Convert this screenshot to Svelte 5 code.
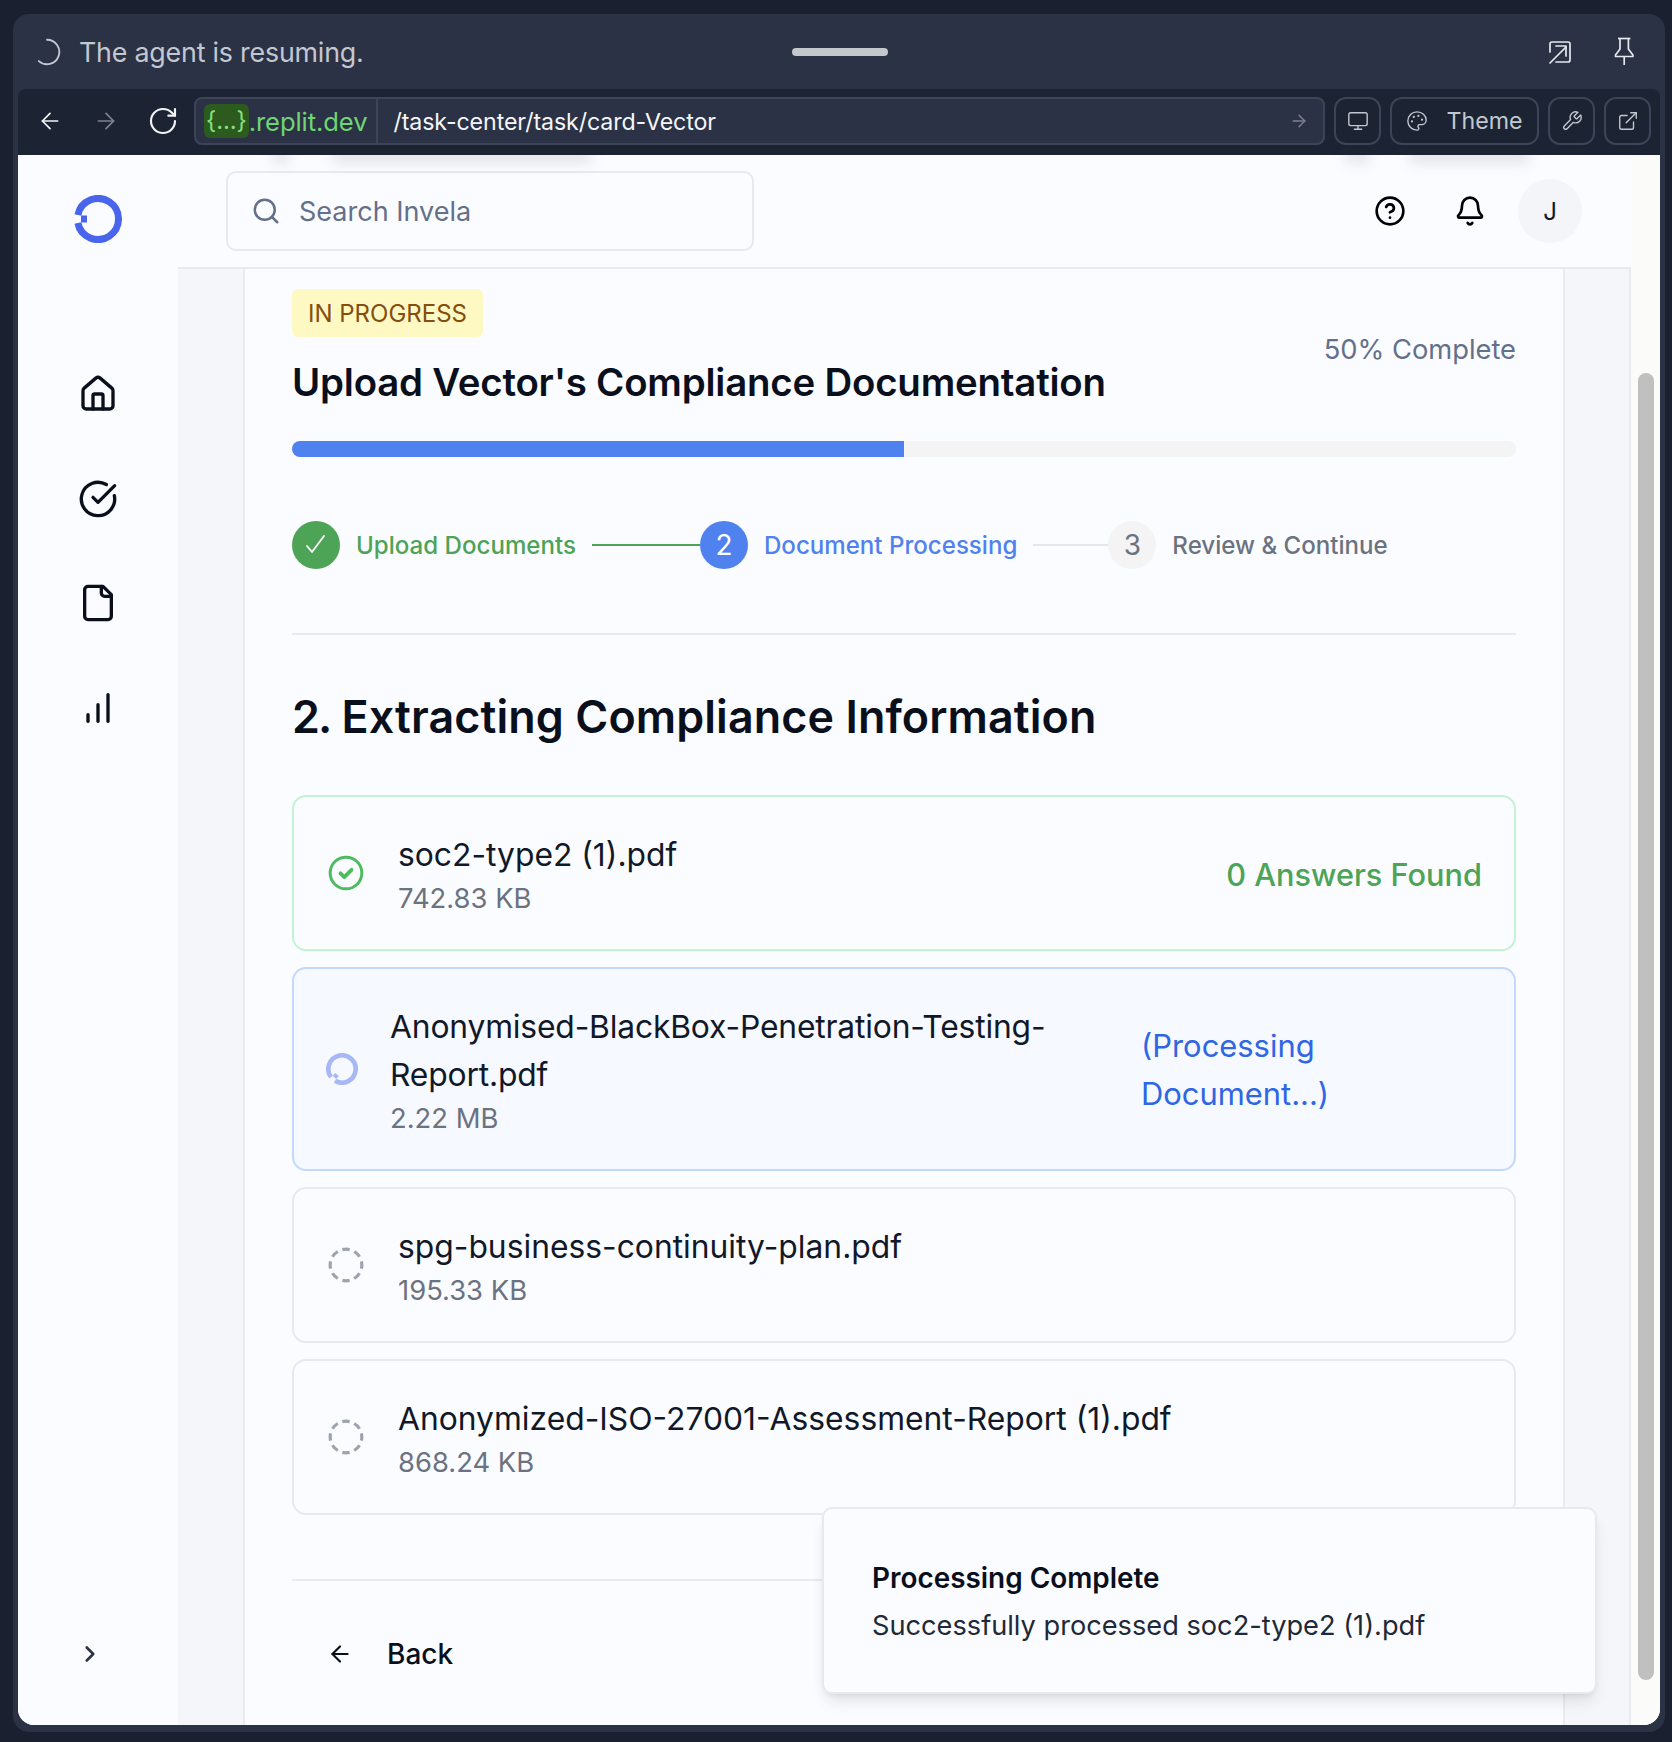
<script lang="ts">
  const navItems = [
    ["M15 21v-8a1 1 0 0 0-1-1h-4a1 1 0 0 0-1 1v8", "M3 10a2 2 0 0 1 .709-1.528l7-5.999a2 2 0 0 1 2.582 0l7 5.999A2 2 0 0 1 21 10v9a2 2 0 0 1-2 2H5a2 2 0 0 1-2-2z"],
    ["M21.801 10A10 10 0 1 1 17 3.335", "m9 11 3 3L22 4"],
    ["M15 2H6a2 2 0 0 0-2 2v16a2 2 0 0 0 2 2h12a2 2 0 0 0 2-2V7Z", "M14 2v4a2 2 0 0 0 2 2h4"],
    ["M12 20V10", "M18 20V4", "M6 20v-4"],
  ];
  const pending = [
    { name: "spg-business-continuity-plan.pdf", size: "195.33 KB" },
    { name: "Anonymized-ISO-27001-Assessment-Report (1).pdf", size: "868.24 KB" },
  ];
</script>

<div class="page">
  <div class="window">
    <div class="agent-bar">
      <div class="agent-status">
        <svg class="spin" viewBox="0 0 24 24"><path d="M12 1.5a10.5 10.5 0 1 1-7 18.3" /></svg>
        <span>The agent is resuming.</span>
      </div>
      <div class="handle"></div>
      <div class="agent-actions">
        <svg class="popout" viewBox="0 0 26 26"><path d="M3 13V5a2 2 0 0 1 2-2h16a2 2 0 0 1 2 2v16a2 2 0 0 1-2 2H9" /><path d="M3 24 19 8" /><path d="M9 7h10v10" /></svg>
        <svg class="pin" viewBox="0 0 20 30"><path d="M4 1.5h12.4" /><path d="M6 1.5V12L1.5 18v1.5h17.4V18L14.4 12V1.5" /><path d="M10.2 19.5V28" /></svg>
      </div>
    </div>

    <div class="nav-bar">
      <svg class="nav-icon" viewBox="0 0 24 24"><path d="m12 19-7-7 7-7" /><path d="M19 12H5" /></svg>
      <svg class="nav-icon dim" viewBox="0 0 24 24"><path d="m12 5 7 7-7 7" /><path d="M5 12h14" /></svg>
      <svg class="nav-icon reload" viewBox="0 0 24 24"><path d="M21 12a9 9 0 1 1-9-9c2.52 0 4.93 1 6.74 2.74L21 8" /><path d="M21 3v5h-5" /></svg>
      <div class="url">
        <div class="domain"><span class="pill">{"{...}"}</span>.replit.dev</div>
        <div class="path">/task-center/task/card-Vector</div>
        <svg class="go" viewBox="0 0 24 24"><path d="m12 5 7 7-7 7" /><path d="M5 12h14" /></svg>
      </div>
      <button class="tool">
        <svg viewBox="0 0 24 24"><rect x="2" y="3" width="20" height="14" rx="2" /><path d="M8 21h8" /><path d="M12 17v4" /></svg>
      </button>
      <button class="tool theme">
        <svg viewBox="0 0 24 24"><path d="M12 22a1 1 0 0 1 0-20 10 9 0 0 1 10 9 5 5 0 0 1-5 5h-2.25a1.75 1.75 0 0 0-1.4 2.8l.3.4a1.75 1.75 0 0 1-1.4 2.8z" /><circle cx="13.5" cy="6.5" r=".5" /><circle cx="17.5" cy="10.5" r=".5" /><circle cx="6.5" cy="12.5" r=".5" /><circle cx="8.5" cy="7.5" r=".5" /></svg>
        <span>Theme</span>
      </button>
      <button class="tool">
        <svg viewBox="0 0 24 24"><path d="M14.7 6.3a1 1 0 0 0 0 1.4l1.6 1.6a1 1 0 0 0 1.4 0l3.77-3.77a6 6 0 0 1-7.94 7.94l-6.91 6.91a2.12 2.12 0 0 1-3-3l6.91-6.91a6 6 0 0 1 7.94-7.94l-3.76 3.76z" /></svg>
      </button>
      <button class="tool">
        <svg viewBox="0 0 24 24"><path d="M15 3h6v6" /><path d="M10 14 21 3" /><path d="M18 13v6a2 2 0 0 1-2 2H5a2 2 0 0 1-2-2V8a2 2 0 0 1 2-2h6" /></svg>
      </button>
    </div>

    <div class="content">
      <aside class="sidebar">
        <svg class="logo" viewBox="0 0 48 48">
          <path d="M3.9 20A20.5 20.5 0 1 1 3.9 28" />
          <rect x="7" y="20.5" width="6" height="7" />
        </svg>
        <nav class="side-nav">
          {#each navItems as paths}
            <svg viewBox="0 0 24 24">
              {#each paths as d}<path {d} />{/each}
            </svg>
          {/each}
        </nav>
        <svg class="expand" viewBox="0 0 24 24"><path d="m9 18 6-6-6-6" /></svg>
      </aside>

      <div class="shell">
        <header class="topbar">
          <div class="search">
            <svg viewBox="0 0 24 24"><circle cx="11" cy="11" r="8" /><path d="m21 21-4.3-4.3" /></svg>
            <span>Search Invela</span>
          </div>
          <div class="top-actions">
            <svg viewBox="0 0 24 24"><circle cx="12" cy="12" r="10" /><path d="M9.09 9a3 3 0 0 1 5.83 1c0 2-3 3-3 3" /><path d="M12 17h.01" /></svg>
            <svg viewBox="0 0 24 24"><path d="M10.268 21a2 2 0 0 0 3.464 0" /><path d="M3.262 15.326A1 1 0 0 0 4 17h16a1 1 0 0 0 .74-1.673C19.41 13.956 18 12.499 18 8A6 6 0 0 0 6 8c0 4.499-1.411 5.956-2.738 7.326" /></svg>
            <div class="avatar">J</div>
          </div>
        </header>

        <div class="gutter">
          <main class="card">
            <div class="title-row">
              <div>
                <span class="badge">IN PROGRESS</span>
                <h1>Upload Vector's Compliance Documentation</h1>
              </div>
              <div class="percent">50% Complete</div>
            </div>

            <div class="progress"><div class="fill" style="width: 50%"></div></div>

            <div class="stepper">
              <div class="circle done">
                <svg viewBox="0 0 24 24"><path d="M3 13l5 6L20 3" /></svg>
              </div>
              <span class="step-label green">Upload Documents</span>
              <div class="line green-line"></div>
              <div class="circle active">2</div>
              <span class="step-label blue">Document Processing</span>
              <div class="line"></div>
              <div class="circle todo">3</div>
              <span class="step-label gray">Review &amp; Continue</span>
            </div>

            <h2><span class="num">2.</span> Extracting Compliance Information</h2>

            <div class="files">
              <div class="file success">
                <svg class="status-icon ok" viewBox="0 0 24 24"><circle cx="12" cy="12" r="10" /><path d="m8.5 12.2 2.4 2.4 4.6-4.6" /></svg>
                <div class="file-text">
                  <div class="file-name">soc2-type2 (1).pdf</div>
                  <div class="file-size">742.83 KB</div>
                </div>
                <div class="found">0 Answers Found</div>
              </div>

              <div class="file processing">
                <svg class="status-icon busy" viewBox="0 0 48 48">
                  <g transform="rotate(-48 24 24)">
                    <path d="M3.9 20A20.5 20.5 0 1 1 3.9 28" />
                    <rect x="7" y="20.5" width="6" height="7" />
                  </g>
                </svg>
                <div class="file-text">
                  <div class="file-name">Anonymised-BlackBox-Penetration-Testing-Report.pdf</div>
                  <div class="file-size">2.22 MB</div>
                </div>
                <div class="proc-status">(Processing Document...)</div>
              </div>

              {#each pending as f}
                <div class="file">
                  <svg class="status-icon wait" viewBox="0 0 24 24"><circle cx="12" cy="12" r="10" pathLength="48" /></svg>
                  <div class="file-text">
                    <div class="file-name">{f.name}</div>
                    <div class="file-size">{f.size}</div>
                  </div>
                </div>
              {/each}
            </div>

            <div class="footer">
              <div class="back">
                <svg viewBox="0 0 24 24"><path d="m12 19-7-7 7-7" /><path d="M19 12H5" /></svg>
                <span>Back</span>
              </div>
            </div>
          </main>
        </div>
      </div>

      <div class="track"><div class="thumb"></div></div>

      <div class="ghost g1"></div>
      <div class="ghost g2"></div>
      <div class="ghost g3"></div>
      <div class="ghost g4"></div>

      <div class="toast">
        <div class="toast-title">Processing Complete</div>
        <div class="toast-msg">Successfully processed soc2-type2 (1).pdf</div>
      </div>
    </div>
  </div>
</div>

<style>
  :global(body) {
    margin: 0;
    background: #1a2030;
    font-family: Inter, "Liberation Sans", sans-serif;
  }
  svg {
    fill: none;
    stroke: currentColor;
    stroke-width: 2;
    stroke-linecap: round;
    stroke-linejoin: round;
    flex: none;
  }
  .page {
    height: 1742px;
    box-sizing: border-box;
    padding: 14px 7px 10px 13px;
    display: flex;
    overflow: hidden;
  }
  .window {
    flex: 1;
    min-width: 0;
    background: #2b3245;
    border-radius: 16px;
    padding: 0 5px 7px;
    display: flex;
    flex-direction: column;
  }

  .agent-bar {
    height: 75px;
    display: flex;
    align-items: center;
    position: relative;
    color: #c2c8d0;
    flex: none;
  }
  .agent-status {
    display: flex;
    align-items: center;
    gap: 18px;
    padding-left: 15px;
    font-size: 26.8px;
    letter-spacing: -0.2px;
    flex: none;
    width: 756px;
    box-sizing: border-box;
  }
  .spin { width: 28px; height: 28px; stroke-width: 1.6; }
  .handle {
    width: 96px;
    height: 8px;
    border-radius: 4px;
    background: #c2c8cc;
    margin-left: 18px;
  }
  .agent-actions {
    margin-left: auto;
    display: flex;
    align-items: center;
    gap: 41px;
    padding-right: 26px;
    color: #e6e8ec;
  }
  .popout { width: 26px; height: 26px; stroke-width: 1.7; }
  .pin { width: 20px; height: 30px; stroke-width: 1.7; stroke-linecap: butt; }

  .nav-bar {
    height: 66px;
    flex: none;
    box-sizing: border-box;
    background: #1c2333;
    border-radius: 8px 8px 0 0;
    display: flex;
    align-items: center;
    padding: 0 9px 2px 19px;
    color: #f2f3f5;
  }
  .nav-icon { width: 26px; height: 26px; stroke-width: 1.6; margin-right: 30px; }
  .nav-icon.dim { color: #7d8392; }
  .nav-icon.reload { width: 32px; height: 32px; margin-right: 15px; margin-left: -2px; }
  .url {
    flex: 1;
    height: 48px;
    box-sizing: border-box;
    background: #2b3245;
    border: 2px solid #3d4458;
    border-radius: 8px;
    display: flex;
    align-items: center;
    padding-left: 8px;
    font-size: 23.2px;
    min-width: 0;
  }
  .domain {
    display: flex;
    align-items: center;
    color: #6fd672;
    height: 100%;
    padding-right: 9px;
    border-right: 2px solid #3d4458;
    font-size: 25.6px;
    letter-spacing: -0.1px;
  }
  .pill {
    background: #2d5a1e;
    height: 34px;
    line-height: 34px;
    border-radius: 6px;
    padding: 0 2px;
    color: #86e07c;
    font-size: 24px;
  }
  .path { padding: 1px 0 0 15px; color: #f5f6f8; letter-spacing: -0.1px; }
  .go { width: 20px; height: 20px; margin-left: auto; margin-right: 14px; color: #7d8392; stroke-width: 1.6; }
  .tool {
    height: 48px;
    min-width: 47px;
    box-sizing: border-box;
    margin-left: 9px;
    background: none;
    border: 2px solid #3d4458;
    border-radius: 12px;
    color: #c2c8d0;
    display: flex;
    align-items: center;
    justify-content: center;
    padding: 0;
    font-family: inherit;
    font-size: 23.2px;
  }
  .tool svg { width: 22px; height: 22px; stroke-width: 1.5; }
  .theme { width: 149px; gap: 18px; }

  .content {
    flex: 1;
    min-height: 0;
    display: flex;
    position: relative;
    overflow: hidden;
    border-radius: 0 0 16px 16px;
    background: #fbfcff;
  }
  .sidebar {
    width: 160px;
    flex: none;
    display: flex;
    flex-direction: column;
    padding: 40px 0 58px;
    box-sizing: border-box;
    background: #fbfcff;
    position: relative;
    z-index: 2;
  }
  .logo {
    width: 48px;
    height: 48px;
    margin-left: 56px;
    color: #4965ec;
    stroke-width: 7;
    stroke-linecap: butt;
  }
  .logo rect, .busy rect { fill: currentColor; stroke: none; }
  .side-nav {
    margin-top: 131px;
    display: flex;
    flex-direction: column;
    align-items: center;
    gap: 64.5px;
    color: #0a0f1c;
  }
  .side-nav svg { width: 40px; height: 40px; }
  .expand {
    width: 26px;
    height: 26px;
    margin-top: auto;
    margin-left: 59px;
    color: #2b3245;
    stroke-width: 2.4;
  }

  .shell {
    flex: 1;
    min-width: 0;
    display: flex;
    flex-direction: column;
  }
  .topbar {
    height: 114px;
    flex: none;
    box-sizing: border-box;
    border-bottom: 2px solid #e6ebf0;
    background: #fbfcff;
    display: flex;
    align-items: flex-start;
    padding: 16px 49px 0 48px;
  }
  .search {
    width: 528px;
    height: 80px;
    box-sizing: border-box;
    border: 2px solid #e5eaf0;
    border-radius: 10px;
    display: flex;
    align-items: center;
    gap: 18px;
    padding-left: 23px;
    font-size: 27px;
    color: #64708a;
  }
  .search svg { width: 30px; height: 30px; }
  .top-actions {
    margin-left: auto;
    display: flex;
    align-items: center;
    color: #000;
    height: 64px;
    margin-top: 8px;
  }
  .top-actions svg { width: 32px; height: 32px; margin-right: 48px; }
  .avatar {
    width: 64px;
    height: 64px;
    border-radius: 50%;
    background: #f3f5f8;
    display: flex;
    align-items: center;
    justify-content: center;
    font-size: 24px;
    color: #111827;
    margin-left: -16px;
  }

  .gutter {
    flex: 1;
    min-height: 0;
    background: #f5f6fa;
    padding: 0 64px 0 65px;
    border-right: 2px solid #e9ecef;
    display: flex;
  }
  .card {
    flex: 1;
    min-width: 0;
    background: #fbfcff;
    border-left: 2px solid #e8ebf0;
    border-right: 2px solid #e8ebf0;
    padding: 20px 47px 0;
    box-sizing: border-box;
  }
  .title-row {
    display: flex;
    justify-content: space-between;
    align-items: flex-start;
  }
  .badge {
    display: inline-block;
    height: 48px;
    line-height: 50px;
    padding: 0 16px;
    border-radius: 6px;
    background: #fef9c3;
    color: #854d0e;
    font-size: 24px;
    font-weight: 400;
  }
  h1 {
    margin: 18px 0 0;
    font-size: 38.4px;
    line-height: 54px;
    font-weight: 600;
    letter-spacing: -0.2px;
    color: #0a0f1c;
  }
  .percent {
    font-size: 27.3px;
    color: #64708a;
    margin-top: 43px;
    line-height: 36px;
  }
  .progress {
    height: 16px;
    margin-top: 32px;
    border-radius: 8px;
    background: #f4f4f5;
    overflow: hidden;
  }
  .fill { height: 100%; background: #4f82ee; }
  .stepper {
    display: flex;
    align-items: center;
    margin-top: 64px;
    height: 48px;
  }
  .circle {
    width: 48px;
    height: 48px;
    border-radius: 50%;
    display: flex;
    align-items: center;
    justify-content: center;
    font-size: 28px;
    flex: none;
  }
  .circle svg { width: 24px; height: 24px; stroke-width: 1.8; }
  .done { background: #4da356; color: #fff; }
  .active { background: #4f82ee; color: #fff; }
  .todo { background: #f4f4f5; color: #6b7280; }
  .step-label { font-size: 24.1px; font-weight: 500; margin-left: 16px; }
  .green { color: #4da356; }
  .blue { color: #4f82ee; }
  .gray { color: #6b7280; }
  .line {
    flex: 0 0 75px;
    height: 2px;
    margin-left: 16px;
    background: #e5e7eb;
  }
  .green-line { flex-basis: 108px; background: #4da356; }
  h2 {
    margin: 64px 0 0;
    padding-top: 52px;
    border-top: 2px solid #e7e9ee;
    font-size: 44.8px;
    line-height: 60px;
    font-weight: 600;
    letter-spacing: 0.1px;
    color: #0a0f1c;
  }
  .num { letter-spacing: -2px; }
  .files {
    margin-top: 48px;
    display: flex;
    flex-direction: column;
    gap: 16px;
  }
  .file {
    height: 156px;
    box-sizing: border-box;
    border: 2px solid #e5eaf0;
    border-radius: 14px;
    display: flex;
    align-items: center;
    padding: 0 32px 0 33px;
    color: #111827;
  }
  .success { border-color: #c5f2d0; }
  .processing {
    height: 204px;
    border-color: #c2d9fb;
    background: #f6f9ff;
    padding: 0 32px 0 31px;
  }
  .status-icon { width: 38px; height: 38px; margin-right: 33px; }
  .ok { color: #4fbb5f; stroke-width: 1.9; }
  .ok path { stroke-width: 2.4; }
  .busy { width: 32px; height: 32px; color: #a8b8f4; stroke-width: 7; stroke-linecap: butt; margin-right: 32px; margin-left: 1px; }
  .wait { color: #9ca3af; }
  .wait circle { stroke-dasharray: 3.6 2.4; stroke-dashoffset: 1.8; stroke-linecap: butt; }
  .file-text { flex: none; }
  .processing .file-text { width: 670px; }
  .processing .file-name { letter-spacing: -0.17px; }
  .file-name { font-size: 31.8px; line-height: 48px; font-weight: 400; color: #111827; }
  .file-size { font-size: 27.4px; line-height: 36px; color: #6b7280; margin-top: 1px; }
  .found {
    margin: 2px 0 0 auto;
    font-size: 30.7px;
    font-weight: 500;
    color: #4da356;
  }
  .proc-status {
    margin: 2px 0 0 81px;
    width: 200px;
    font-size: 30.9px;
    line-height: 48px;
    color: #2f66e3;
  }
  .footer {
    margin-top: 64px;
    border-top: 2px solid #e8ebf0;
    padding: 56px 0 0 35px;
  }
  .back {
    display: flex;
    align-items: center;
    gap: 34px;
    font-size: 28px;
    font-weight: 500;
    color: #0a0f1c;
  }
  .back svg { width: 26px; height: 26px; }

  .track {
    width: 29px;
    flex: none;
    background: #fbfbf9;
    padding: 218px 6px 0 7px;
    box-sizing: border-box;
  }
  .thumb {
    width: 16px;
    height: 1307px;
    border-radius: 8px;
    background: #c0c0c0;
  }

  .ghost {
    position: absolute;
    top: -8px;
    height: 16px;
    background: #8a8f9a;
    filter: blur(7px);
    opacity: 0.22;
  }
  .g1 { left: 254px; width: 18px; }
  .g2 { left: 314px; width: 260px; }
  .g3 { left: 1328px; width: 24px; }
  .g4 { left: 1392px; width: 120px; }

  .toast {
    position: absolute;
    left: 804px;
    top: 1352px;
    width: 775px;
    height: 187px;
    box-sizing: border-box;
    background: #fbfcff;
    border: 2px solid #e5eaf0;
    border-radius: 10px;
    box-shadow: 0 10px 15px -3px rgba(0, 0, 0, 0.1), 0 4px 6px -4px rgba(0, 0, 0, 0.1);
    padding: 50px 48px 0;
    z-index: 3;
  }
  .toast-title { font-size: 27.9px; font-weight: 600; line-height: 38px; color: #0a0f1c; }
  .toast-msg { font-size: 27.2px; line-height: 36px; margin-top: 11px; color: #1f2937; }
</style>
